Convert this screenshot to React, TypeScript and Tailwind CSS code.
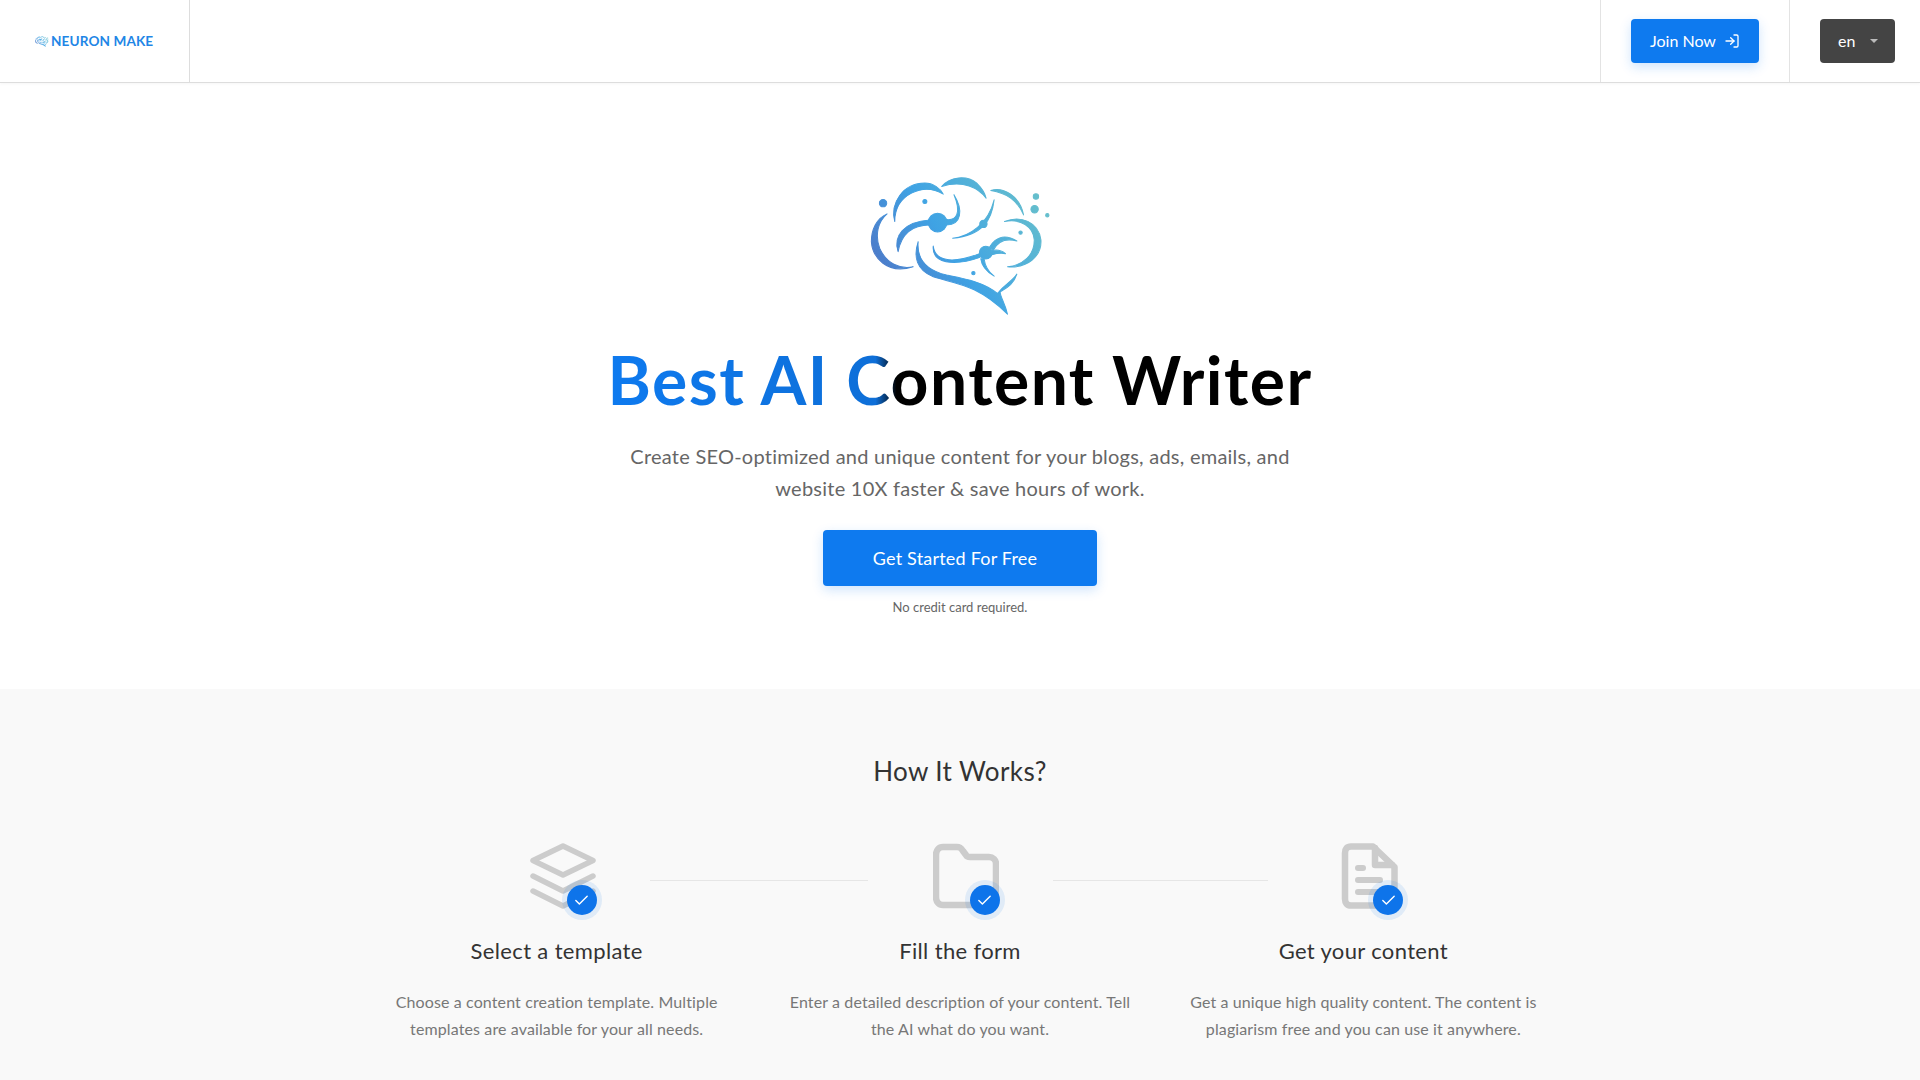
import React from "react";
import { Check, LogIn } from "lucide-react";

const font = "font-['Lato','Noto_Sans',sans-serif]";

function Brain({ id, className, thick }: { id: string; className: string; thick: number }) {
  return (
    <svg viewBox="55 40 550 430" className={className} aria-hidden="true">
      <defs>
        <linearGradient id={id} gradientUnits="userSpaceOnUse" x1="90" y1="400" x2="560" y2="100">
          <stop offset="0" stopColor="#4f73c4" />
          <stop offset="0.45" stopColor="#3fa3e4" />
          <stop offset="1" stopColor="#66bfcc" />
        </linearGradient>
      </defs>
      <g fill={`url(#${id})`} stroke={`url(#${id})`} strokeWidth={thick} strokeLinejoin="round">
        <path d="M135 185C120 130 160 70 225 70C250 70 270 85 280 103C250 85 215 85 185 100C150 118 135 150 135 185Z" />
        <path d="M275 80C300 50 350 45 380 70C395 85 405 100 408 115C385 85 340 60 275 80Z" />
        <path d="M422 92C460 80 510 110 520 165C500 120 470 100 422 92Z" />
        <path d="M463 185C510 165 565 185 572 240C575 290 530 325 472 320C520 315 552 285 552 240C550 200 510 175 463 185Z" />
        <path d="M112 162C80 175 65 210 65 245C68 290 110 345 190 320C150 328 110 310 90 265C75 225 85 185 112 162Z" />
        <path d="M205 245C190 290 200 330 250 350C310 370 380 370 472 462C465 430 450 410 450 395C465 385 490 375 500 342C485 365 465 370 442 400C400 365 340 355 290 345C235 332 200 300 205 245Z" />
        <circle cx="263" cy="188" r="28" />
        <path d="M145 275C130 230 160 185 240 180L240 195C190 195 155 220 145 275Z" />
        <path d="M285 178C320 185 335 160 312 105C340 150 335 195 290 195Z" />
        <path d="M308 235C360 230 415 190 432 120C425 180 400 225 308 235Z" />
        <circle cx="400" cy="192" r="11" />
        <circle cx="407" cy="278" r="19" />
        <path d="M250 258C255 300 300 315 390 280L390 292C310 320 245 310 250 258Z" />
        <path d="M418 262C440 225 470 225 500 243C470 235 445 240 430 270Z" />
        <path d="M425 272C440 268 455 272 466 281C450 278 440 280 425 284Z" />
        <path d="M402 296C405 320 415 335 432 348C410 335 395 320 392 296Z" />
        <circle cx="100" cy="130" r="11" />
        <circle cx="225" cy="125" r="6" />
        <circle cx="557" cy="110" r="8" />
        <circle cx="553" cy="148" r="11" />
        <circle cx="591" cy="166" r="5" />
        <circle cx="511" cy="218" r="5" />
        <circle cx="370" cy="339" r="5" />
      </g>
    </svg>
  );
}

function LayersIcon() {
  return (
    <svg viewBox="0 0 66 66" className="block w-[66px] h-[66px]" fill="none" stroke="#cccccc" strokeWidth="5.5" strokeLinecap="round" strokeLinejoin="round">
      <path d="M33 3L63 17.5L33 32L3 17.5Z" />
      <path d="M3 33L33 48L63 33" />
      <path d="M3 48L33 63L63 48" />
    </svg>
  );
}
function FolderIcon() {
  return (
    <svg viewBox="0 0 66 66" className="block w-[66px] h-[66px]" fill="none" stroke="#cccccc" strokeWidth="6.5" strokeLinecap="round" strokeLinejoin="round">
      <path d="M3 12C3 7 6 4 10 4H24C27 4 28 5 30 8L33 12C34 14 35 14 37 14H56C60 14 63 17 63 21V54C63 59 60 62 56 62H10C6 62 3 59 3 54Z" />
    </svg>
  );
}
function DocIcon() {
  return (
    <svg viewBox="0 0 66 66" className="block w-[66px] h-[66px]" fill="none" stroke="#cccccc" strokeWidth="6.5" strokeLinecap="round" strokeLinejoin="round">
      <path d="M37 3.5H15C11 3.5 9 6 9 10V56C9 60 11 62.5 15 62.5H53C57 62.5 58.5 60 58.5 56V24Z" />
      <path d="M39 5V22H56" />
      <path d="M22 25H27" strokeWidth="6" />
      <path d="M22 37H44" strokeWidth="6" />
      <path d="M22 49H44" strokeWidth="6" />
    </svg>
  );
}

function Badge({ className }: { className: string }) {
  return (
    <span className={`absolute flex w-[30px] h-[30px] items-center justify-center rounded-full bg-[#0e74ea] text-white shadow-[0_0_0_5px_rgba(14,116,234,0.1)] ${className}`}>
      <Check size={17} strokeWidth={2} />
    </span>
  );
}

function Step({ icon, title, lines, badge, iconShift, connector }: {
  icon: React.ReactNode; title: string; lines: string[]; badge: string; iconShift: string; connector?: string;
}) {
  return (
    <div className="relative flex flex-col items-center text-center">
      {connector && <div className={`absolute top-[37px] left-[295px] h-px bg-[#e6e6e6] ${connector}`} />}
      <div className={`relative ${iconShift}`}>
        {icon}
        <Badge className={badge} />
      </div>
      <h3 className="mt-[27px] text-[22px] leading-[30px] tracking-[0.35px] text-[#333333]">{title}</h3>
      <p className="mt-[22px] text-[16px] leading-[27px] tracking-[0.12px] text-[#777777]">
        {lines[0]}
        <br />
        {lines[1]}
      </p>
    </div>
  );
}

export default function App() {
  return (
    <div className={`${font} min-h-screen flex flex-col bg-white`}>
      <header className="flex h-[83px] border-b border-[#dddddd] shadow-[0_1px_3px_rgba(0,0,0,0.04)]">
        <div className="flex w-[190px] items-center gap-[2px] border-r border-[#dddddd] pl-[35px]">
          <Brain id="brain-small" thick={10} className="w-[14px] h-[11px]" />
          <span className="text-[13.6px] font-bold tracking-[0.1px] text-[#1f86e6]">NEURON MAKE</span>
        </div>
        <div className="flex-1" />
        <div className="flex w-[190px] items-center justify-center border-x border-[#e3e3e3]">
          <button className="flex h-[44px] w-[128px] items-center justify-center gap-[8px] rounded bg-[#0e7aef] text-[16px] text-white shadow-[0_4px_12px_rgba(14,122,239,0.2)]">
            Join Now
            <LogIn size={16} strokeWidth={2} />
          </button>
        </div>
        <div className="flex w-[130px] items-center pl-[30px]">
          <button className="flex h-[44px] w-[75px] items-center gap-[15px] rounded bg-[#444444] pl-[18px] text-[16px] text-white">
            en
            <span className="h-0 w-0 border-x-[4px] border-t-[4px] border-x-transparent border-t-[#bbbbbb]" />
          </button>
        </div>
      </header>

      <section className="flex flex-col items-center">
        <Brain id="brain-large" thick={3} className="mt-[87px] w-[184px] h-[150px]" />
        <h1 className="mt-[18px] w-fit bg-[linear-gradient(90deg,#0e7aef_0%,#0e6fd8_38%,#000000_41%)] bg-clip-text text-[66px] font-bold leading-[84px] tracking-[1.45px] text-transparent">
          Best AI Content Writer
        </h1>
        <p className="mt-[18px] text-center text-[20px] leading-[32px] tracking-[0.24px] text-[#666666]">
          Create SEO-optimized and unique content for your blogs, ads, emails, and
          <br />
          website 10X faster &amp; save hours of work.
        </p>
        <button className="mt-[26px] h-[56px] w-[274px] rounded bg-[#0e7aef] pr-[10px] text-[18px] tracking-[0.2px] text-white shadow-[0_4px_12px_rgba(14,122,239,0.2)]">
          Get Started For Free
        </button>
        <p className="mt-[12px] text-[13px] leading-[18px] text-[#666666]">No credit card required.</p>
      </section>

      <section className="mt-[73px] flex flex-1 flex-col items-center bg-[#f9f9f9] pb-[30px]">
        <h2 className="mt-[64px] text-[26px] leading-[36px] tracking-[0.4px] text-[#333333]">How It Works?</h2>
        <div className="mt-[54px] grid w-[1210px] grid-cols-3">
          <Step
            icon={<LayersIcon />}
            title="Select a template"
            lines={["Choose a content creation template. Multiple", "templates are available for your all needs."]}
            badge="left-[37px] top-[42px]"
            iconShift="left-[6px]"
            connector="w-[218px]"
          />
          <Step
            icon={<FolderIcon />}
            title="Fill the form"
            lines={["Enter a detailed description of your content. Tell", "the AI what do you want."]}
            badge="left-[37px] top-[42px]"
            iconShift="left-[6px]"
            connector="w-[215px]"
          />
          <Step
            icon={<DocIcon />}
            title="Get your content"
            lines={["Get a unique high quality content. The content is", "plagiarism free and you can use it anywhere."]}
            badge="left-[37px] top-[42px]"
            iconShift="left-[6px]"
          />
        </div>
      </section>
    </div>
  );
}
